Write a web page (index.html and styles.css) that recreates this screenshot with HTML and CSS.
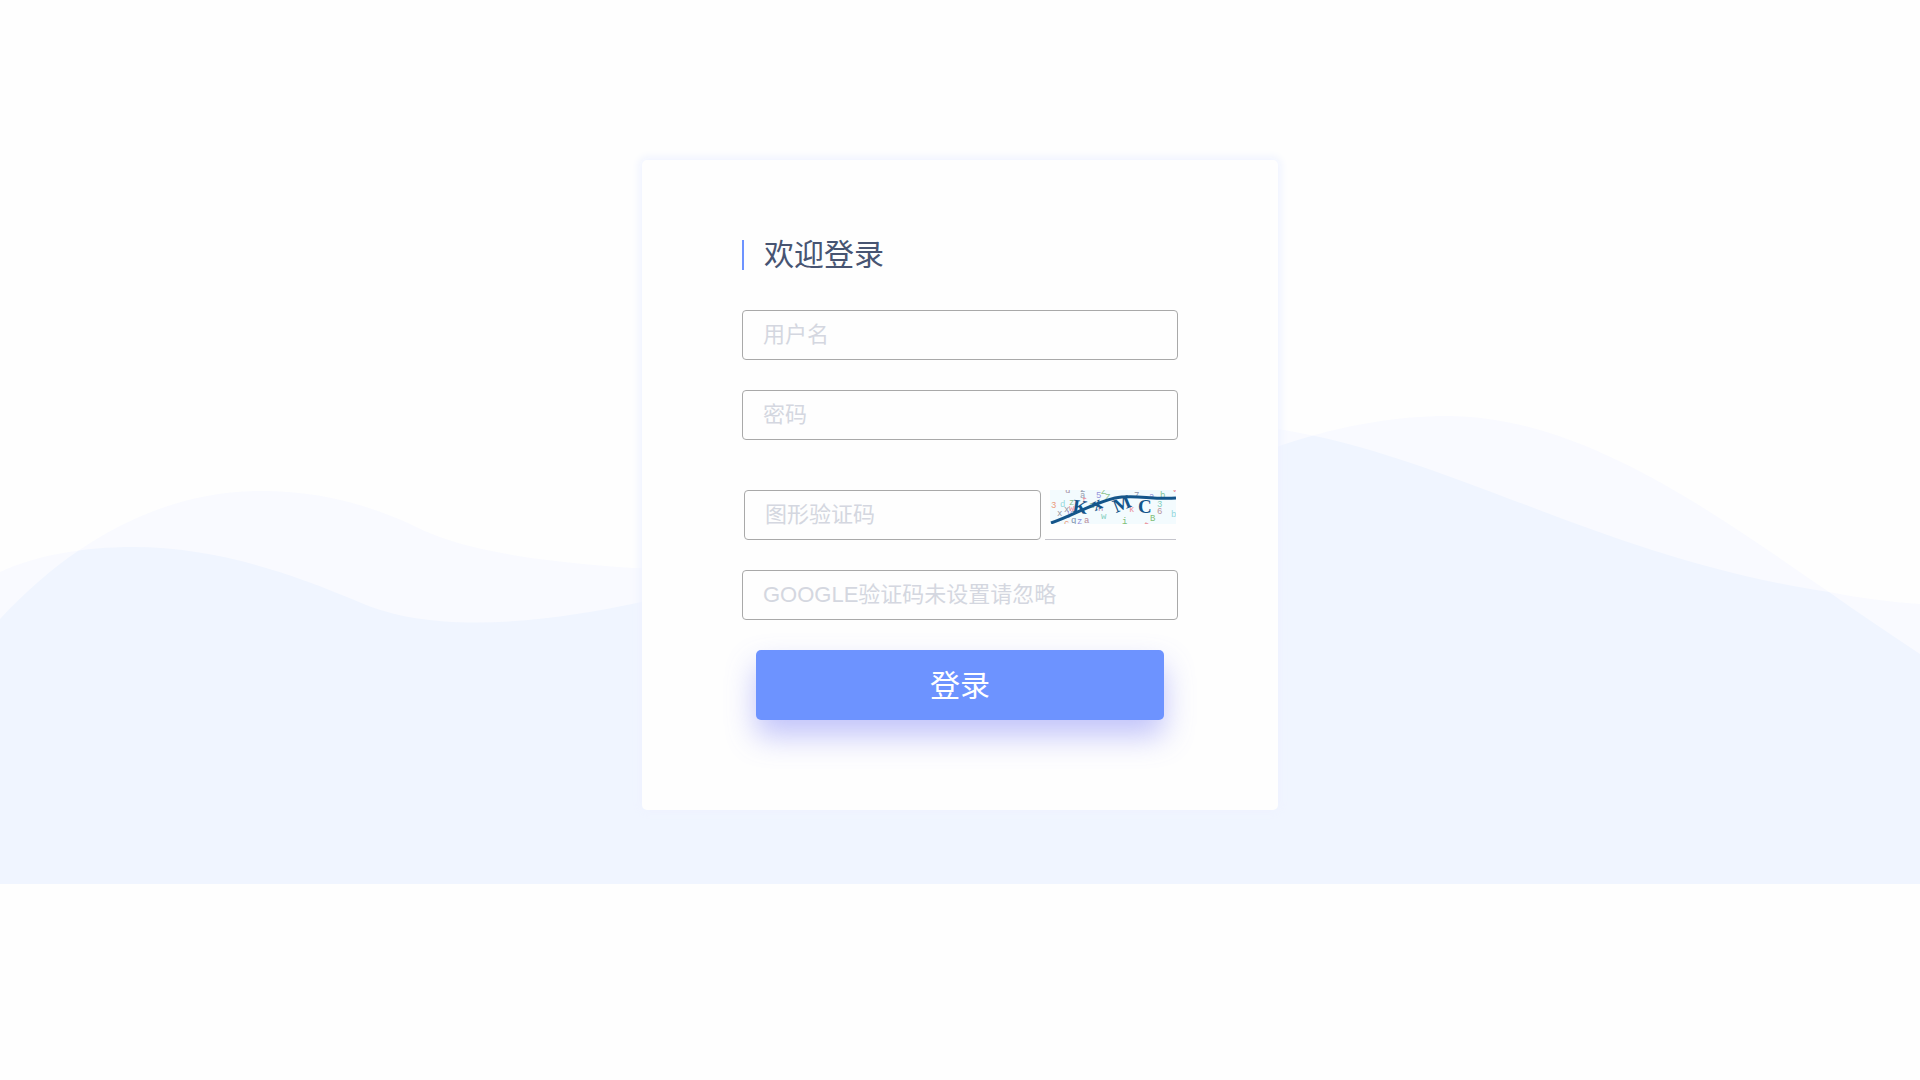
FILE: index.html
```html
<!DOCTYPE html>
<html lang="zh-CN">
<head>
  <meta charset="UTF-8">
  <meta name="viewport" content="width=device-width, initial-scale=1.0">
  <title>登录</title>
  <link rel="stylesheet" href="styles.css">
</head>
<body>

  <main class="login-page">
    <svg class="waves" viewBox="0 0 1920 884" preserveAspectRatio="none" aria-hidden="true">
      <defs>
        <path id="waveA" d="M0 619 C80 533 170 491 261 491 C315 491 360 502 408 523 C455 548 520 560 633 568 C850 570 1090 399 1284 430 C1450 457 1610 560 1829 592 C1860 598 1890 602 1920 604 V884 H0 Z"/>
        <path id="waveB" d="M0 572 C36 555 85 547 133 547 C215 547 290 573 359 602 C440 638 560 619 637 603 C850 550 1080 530 1282 445 C1345 424 1400 416 1447 416 C1580 416 1710 510 1829 592 C1860 614 1890 634 1920 654 V884 H0 Z"/>
        <clipPath id="clipA"><use href="#waveA"/></clipPath>
      </defs>
      <use href="#waveA" fill="#f9faff"/>
      <use href="#waveB" fill="#f9faff"/>
      <use href="#waveB" fill="#f0f5ff" clip-path="url(#clipA)"/>
    </svg>

    <form class="login-box">
      <h1 class="title">欢迎登录</h1>
      <input class="field" type="text" name="username" placeholder="用户名" aria-label="用户名">
      <input class="field" type="password" name="password" placeholder="密码" aria-label="密码">

      <div class="captcha-row">
        <input class="field" type="text" name="captcha" placeholder="图形验证码" aria-label="图形验证码">
        <div class="captcha">
          <svg width="126" height="34" viewBox="0 0 126 34">
            <rect width="126" height="34" fill="#f3fbfe"/>
            <g class="noise">
              <text x="1" y="18" fill="#eb9a7c">3</text>
              <text x="10" y="17" fill="#95d8dc">d</text>
              <text x="19" y="15" fill="#83bf8a">z</text>
              <text x="7" y="26" fill="#9595a0">x</text>
              <text x="14" y="22" fill="#9595a0">x</text>
              <text x="19" y="21" fill="#eb909c">w</text>
              <text x="15" y="3" fill="#a590a5">u</text>
              <text x="30" y="2" fill="#95a0b0">2</text>
              <text x="30" y="8" fill="#95a0b0">a</text>
              <text x="46" y="8" fill="#9595dc">5</text>
              <text x="51" y="4" fill="#90c590">Z</text>
              <text x="55" y="10" fill="#90c590">Z</text>
              <text x="32" y="13" fill="#eb909c">t</text>
              <text x="39" y="18" fill="#83bf8a">a</text>
              <text x="48" y="21" fill="#b98bb5">n</text>
              <text x="17" y="26" fill="#908bd6">y</text>
              <text x="21" y="33" fill="#7f90aa">q</text>
              <text x="14" y="36" fill="#eb9a7c">c</text>
              <text x="27" y="34" fill="#908bd6">z</text>
              <text x="34" y="33" fill="#b98b9a">a</text>
              <text x="51" y="29" fill="#85cfbf">w</text>
              <text x="72" y="34" fill="#7fbf78">i</text>
              <text x="79" y="22" fill="#eb909c">k</text>
              <text x="84" y="8" fill="#9095aa">7</text>
              <text x="99" y="9" fill="#9595dc">a</text>
              <text x="110" y="8" fill="#83c599">b</text>
              <text x="107" y="17" fill="#85cfbf">3</text>
              <text x="107" y="24" fill="#b995a0">6</text>
              <text x="100" y="31" fill="#7fbf78">B</text>
              <text x="121" y="27" fill="#95d8dc">b</text>
              <text x="94" y="38" fill="#eb909c">t</text>
              <text x="122" y="2" fill="#eb909c">v</text>
            </g>
            <g class="code">
              <text x="23" y="23" transform="rotate(8 30 16)">K</text>
              <text x="42" y="20" transform="rotate(-25 46 14)">x</text>
              <text x="63" y="20" transform="rotate(-22 72 14)">M</text>
              <text x="88" y="23">C</text>
            </g>
            <path d="M1 33 C22 26 43 13 65 8 C84 4 102 10 126 8" fill="none" stroke="#14558a" stroke-width="3"/>
          </svg>
        </div>
      </div>

      <input class="field" type="text" name="google" placeholder="GOOGLE验证码未设置请忽略" aria-label="GOOGLE验证码">
      <button class="submit" type="submit">登录</button>
    </form>
  </main>

</body>
</html>
```

FILE: styles.css
```css
* {
  box-sizing: border-box;
}
body {
  margin: 0;
  background: #fefefe;
  font-family: "Liberation Sans", "Noto Sans CJK SC", sans-serif;
}
.login-page {
  position: relative;
  display: flex;
  justify-content: center;
  padding: 160px 20px 74px;
}
.waves {
  position: absolute;
  top: 0;
  left: 0;
  width: 100%;
  height: 100%;
}
.login-box {
  position: relative;
  display: flex;
  flex-direction: column;
  width: 100%;
  max-width: 636px;
  padding: 80px 100px 90px;
  background: #fefefe;
  border-radius: 5px;
  box-shadow: 0 0 8px 3px #eff3ff;
}
.title {
  margin: 0 0 40px;
  padding-left: 20px;
  border-left: 2px solid #6d93ff;
  font-size: 30px;
  line-height: 30px;
  font-weight: 400;
  color: #475472;
}
.field {
  width: 100%;
  height: 50px;
  margin-bottom: 30px;
  padding: 0 20px;
  border: 1px solid #a9a9a9;
  border-radius: 4px;
  background: #fefefe;
  font-family: inherit;
  font-size: 22px;
  color: #475472;
}
.field::placeholder {
  color: #d4d7e0;
}
.captcha-row {
  display: flex;
  gap: 4px;
  margin: 20px 2px 30px;
}
.captcha-row .field {
  flex: 1;
  min-width: 0;
  margin: 0;
}
.captcha {
  height: 50px;
  padding-left: 5px;
  border-bottom: 1px solid #c5c5cc;
}
.captcha svg {
  display: block;
}
.noise {
  font-family: "Liberation Mono", monospace;
  font-size: 9px;
}
.code {
  font-family: "Liberation Serif", serif;
  font-size: 19px;
  font-weight: 700;
  fill: #14558a;
}
.submit {
  height: 70px;
  margin: 0 14px;
  padding: 0 0 4px;
  border: none;
  border-radius: 5px;
  background: #6d93ff;
  box-shadow: 0 16px 30px rgba(109, 114, 245, 0.42);
  font-family: inherit;
  font-size: 30px;
  color: #fff;
  cursor: pointer;
}
```
